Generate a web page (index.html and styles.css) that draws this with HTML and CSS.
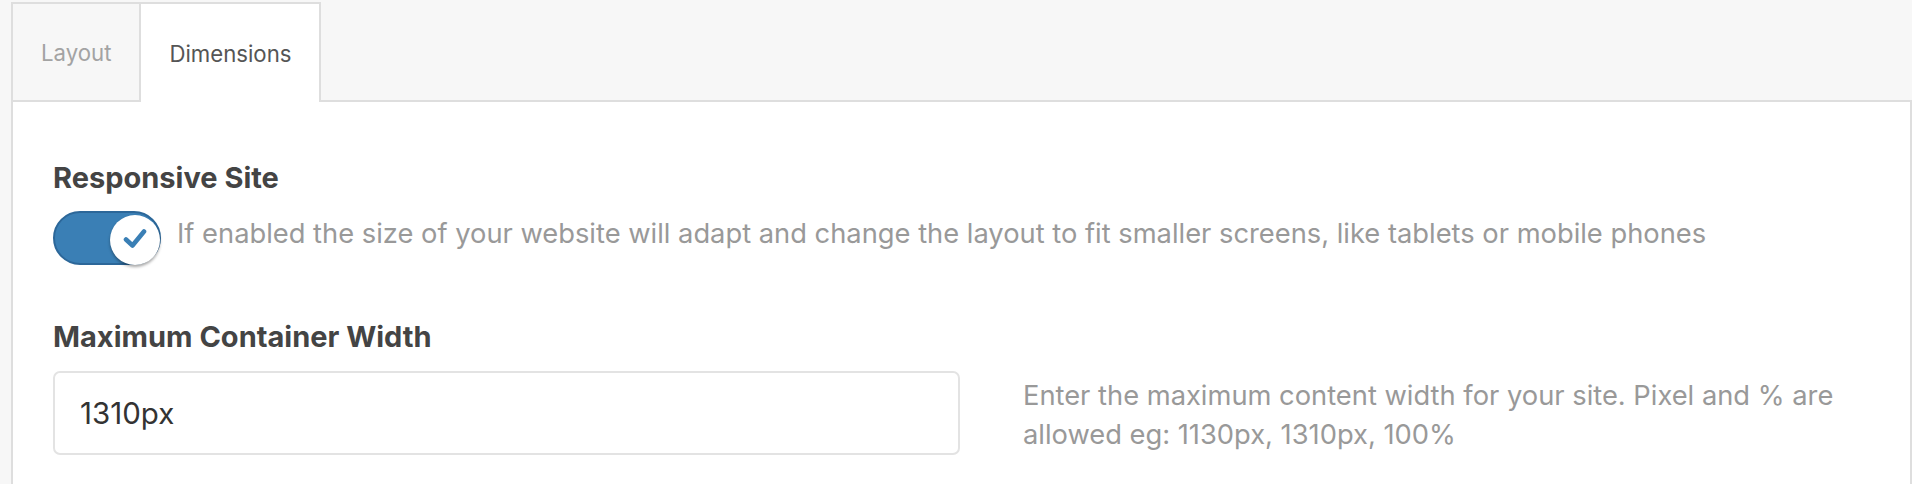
FILE: index.html
```html
<!DOCTYPE html>
<html lang="en">
<head>
<meta charset="utf-8">
<title>Dimensions</title>
<link rel="stylesheet" href="styles.css">
</head>
<body>
<div class="settings">
  <nav class="tabs">
    <a class="tab">Layout</a>
    <a class="tab tab-active">Dimensions</a>
  </nav>
  <div class="panel">
    <div class="field">
      <h3 class="field-title">Responsive Site</h3>
      <div class="toggle-row">
        <span class="toggle">
          <span class="knob">
            <svg class="check" viewBox="0 0 24 24" width="24" height="24"><path d="M3 12.5 L9.5 18.5 L21 4.5" fill="none" stroke="#3a7fb5" stroke-width="4.6" stroke-linecap="round" stroke-linejoin="round"/></svg>
          </span>
        </span>
        <span class="toggle-desc">If enabled the size of your website will adapt and change the layout to fit smaller screens, like tablets or mobile phones</span>
      </div>
    </div>
    <div class="field field-second">
      <h3 class="field-title">Maximum Container Width</h3>
      <div class="input-row">
        <input class="text-input" type="text" value="1310px">
        <p class="input-desc">Enter the maximum content width for your site. Pixel and % are allowed eg: 1130px, 1310px, 100%</p>
      </div>
    </div>
  </div>
</div>
</body>
</html>
```

FILE: styles.css
```css
html, body {
  margin: 0;
  padding: 0;
}
body {
  background: #f7f7f7;
  font-family: Inter, "Liberation Sans", Arial, sans-serif;
  height: 484px;
  overflow: hidden;
}
.settings {
  padding: 2px 0 0 11px;
}
.tabs {
  display: flex;
  height: 98px;
}
.tab {
  box-sizing: border-box;
  height: 98px;
  display: flex;
  align-items: center;
  padding: 0 28px;
  border: 2px solid #dedede;
  border-bottom: 0;
  background: #f7f7f7;
  color: #a3a3a3;
  font-size: 22.2px;
  cursor: pointer;
}
.tab-active {
  border-left: 0;
  background: #fff;
  color: #555;
  height: 100px;
  margin-bottom: -2px;
  position: relative;
  z-index: 1;
}
.panel {
  background: #fff;
  border: 2px solid #dedede;
  border-bottom: 0;
  padding: 59px 40px 40px 40px;
  min-height: 400px;
}
.field-title {
  margin: 0;
  font-size: 29px;
  line-height: 34px;
  font-weight: 700;
  color: #444;
}
.toggle-row {
  display: flex;
  align-items: flex-start;
  margin-top: 16px;
  gap: 16px;
}
.toggle {
  box-sizing: border-box;
  flex: none;
  width: 108px;
  height: 54px;
  border-radius: 27px;
  background: #3a7fb5;
  border: 2px solid #2c6799;
  display: flex;
  align-items: center;
  justify-content: flex-end;
}
.knob {
  width: 50px;
  height: 50px;
  border-radius: 50%;
  background: #fff;
  margin-top: 4px;
  margin-right: -1px;
  box-shadow: 0 2px 3px rgba(0, 0, 0, 0.35);
  display: flex;
  align-items: center;
  justify-content: center;
}
.check {
  display: block;
  margin-top: -3px;
}
.toggle-desc {
  font-size: 27.3px;
  line-height: 45px;
  color: #999;
  white-space: nowrap;
}
.field-second {
  margin-top: 55px;
}
.input-row {
  display: flex;
  align-items: center;
  margin-top: 17px;
}
.text-input {
  box-sizing: border-box;
  flex: none;
  width: 907px;
  height: 84px;
  border: 2px solid #e3e3e3;
  border-radius: 7px;
  padding: 0 25px;
  font-family: inherit;
  font-size: 29.5px;
  color: #333;
  background: #fff;
  outline: none;
}
.input-desc {
  margin: 4px 0 0 63px;
  width: 860px;
  font-size: 27.3px;
  line-height: 39px;
  color: #999;
}
```
